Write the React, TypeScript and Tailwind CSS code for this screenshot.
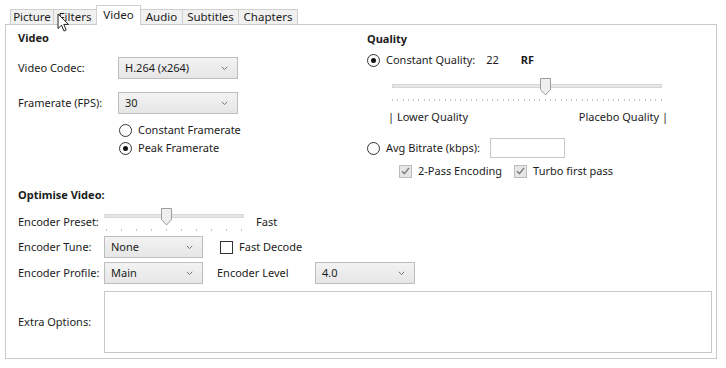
import React from 'react';

const TABS = [
  { label: 'Picture', w: 'w-[44px]' },
  { label: 'Filters', w: 'w-[44px]' },
  { label: 'Video', w: 'w-[45px]', active: true },
  { label: 'Audio', w: 'w-[43px]' },
  { label: 'Subtitles', w: 'w-[57px]' },
  { label: 'Chapters', w: 'w-[60px]' },
];

const Chevron: React.FC = () => (
  <svg width="7" height="5" viewBox="0 0 7 5" className="shrink-0">
    <polyline points="0.8,0.8 3.5,3.6 6.2,0.8" fill="none" stroke="#777" strokeWidth="1" />
  </svg>
);

const Select: React.FC<{ value: string; w: string }> = ({ value, w }) => (
  <div className={`${w} h-[22px] flex items-center justify-between pl-[6px] pr-[9px] border border-[#bdbdbd] bg-gradient-to-b from-[#f3f3f3] to-[#e6e6e6]`}>
    <span>{value}</span>
    <Chevron />
  </div>
);

const Radio: React.FC<{ checked?: boolean }> = ({ checked }) => (
  <div className="w-[13px] h-[13px] rounded-full border border-[#333] bg-white flex items-center justify-center shrink-0">
    {checked && <div className="w-[5px] h-[5px] rounded-full bg-[#111]" />}
  </div>
);

const Check: React.FC<{ checked?: boolean; disabled?: boolean }> = ({ checked, disabled }) => (
  <div
    className={`w-[13px] h-[13px] border flex items-center justify-center shrink-0 ${
      disabled ? 'border-[#bcbcbc] bg-[#e6e6e6]' : 'border-[#333] bg-white'
    }`}
  >
    {checked && (
      <svg width="9" height="8" viewBox="0 0 9 8">
        <polyline points="1,4.2 3.4,6.6 8,1" fill="none" stroke={disabled ? '#7d7d7d' : '#222'} strokeWidth="1.4" />
      </svg>
    )}
  </div>
);

// Trackbar with a downward pointing thumb and tick marks underneath
const Slider: React.FC<{ w: string; pos: number; ticks: number; tickGap: string }> = ({ w, pos, ticks, tickGap }) => (
  <div className={`${w} relative h-[26px] shrink-0`}>
    <div className="absolute left-0 right-0 top-[6px] h-[4px] bg-[#e7e7e7] border border-[#d6d6d6]" />
    <svg width="11" height="18" viewBox="0 0 11 18" className="absolute top-0" style={{ left: pos }}>
      <path d="M0.5 0.5 H10.5 V11.5 L5.5 17 L0.5 11.5 Z" fill="#efefef" stroke="#9c9c9c" />
    </svg>
    <div className={`absolute left-0 right-0 top-[21px] flex justify-between ${tickGap}`}>
      {Array.from({ length: ticks }).map((_, i) => (
        <div key={i} className="w-px h-[2px] bg-[#c4c4c4]" />
      ))}
    </div>
  </div>
);

const App: React.FC = () => {
  return (
    <div
      className="relative w-[726px] h-[368px] bg-white text-[11px] leading-[16px] text-[#1c1c1c] whitespace-nowrap overflow-hidden"
      style={{ fontFamily: '"Noto Sans", "Open Sans", sans-serif' }}
    >
      {/* Tab strip */}
      <div className="flex items-end h-[24px] pl-[10px]">
        {TABS.map((t, i) => (
          <div
            key={t.label}
            className={`${t.w} flex items-center justify-center border border-b-0 border-[#cfcfcf] ${i > 0 ? '-ml-px' : ''} ${
              t.active ? 'relative z-10 h-[20px] -mb-px bg-white pb-[2px]' : 'h-[15px] bg-[#f0f0f0]'
            }`}
          >
            <span className="text-[11.5px]">{t.label}</span>
          </div>
        ))}
      </div>

      {/* Panel */}
      <div className="ml-[5px] w-[712px] h-[335px] border border-[#c9c9c9]">
        <div className="grid grid-cols-[361px_1fr] h-[162px]">
          {/* Video column */}
          <div className="pl-[12px]">
            <div className="mt-[5px] h-[16px] font-bold">Video</div>
            <div className="mt-[11px] flex items-center">
              <span className="w-[100px]">Video Codec:</span>
              <Select value="H.264 (x264)" w="w-[120px]" />
            </div>
            <div className="mt-[13px] flex items-center">
              <span className="w-[100px]">Framerate (FPS):</span>
              <Select value="30" w="w-[120px]" />
            </div>
            <div className="mt-[7px] ml-[101px] h-[18px] flex items-center gap-[6px]">
              <Radio />
              <span>Constant Framerate</span>
            </div>
            <div className="ml-[101px] h-[18px] flex items-center gap-[6px]">
              <Radio checked />
              <span>Peak Framerate</span>
            </div>
          </div>

          {/* Quality column */}
          <div>
            <div className="mt-[6px] h-[16px] font-bold">Quality</div>
            <div className="mt-[5px] h-[16px] flex items-center">
              <Radio checked />
              <span className="ml-[6px]">Constant Quality:</span>
              <span className="ml-[11px]">22</span>
              <span className="ml-[22px] font-bold">RF</span>
            </div>
            <div className="mt-[10px] ml-[25px]">
              <Slider w="w-[270px]" pos={148} ticks={52} tickGap="" />
            </div>
            <div className="mt-[5px] ml-[21px] w-[280px] h-[16px] flex justify-between">
              <span>| Lower Quality</span>
              <span>Placebo Quality |</span>
            </div>
            <div className="mt-[13px] h-[20px] flex items-center">
              <Radio />
              <span className="ml-[6px]">Avg Bitrate (kbps):</span>
              <div className="ml-[10px] w-[75px] h-[20px] border border-[#c7c7c7] bg-white" />
            </div>
            <div className="mt-[5px] ml-[32px] h-[16px] flex items-center">
              <Check checked disabled />
              <span className="ml-[6px]">2-Pass Encoding</span>
              <div className="ml-[12px]">
                <Check checked disabled />
              </div>
              <span className="ml-[6px]">Turbo first pass</span>
            </div>
          </div>
        </div>

        {/* Optimise video */}
        <div className="pl-[12px]">
          <div className="h-[16px] font-bold">Optimise Video:</div>
          <div className="mt-[5px] h-[26px] flex items-start">
            <span className="w-[86px] shrink-0 mt-[6px]">Encoder Preset:</span>
            <Slider w="w-[140px]" pos={57} ticks={10} tickGap="px-[2px]" />
            <span className="ml-[12px] mt-[6px]">Fast</span>
          </div>
          <div className="mt-[2px] flex items-center">
            <span className="w-[86px] shrink-0">Encoder Tune:</span>
            <Select value="None" w="w-[99px]" />
            <div className="ml-[17px]">
              <Check />
            </div>
            <span className="ml-[6px]">Fast Decode</span>
          </div>
          <div className="mt-[4px] flex items-center">
            <span className="w-[86px] shrink-0">Encoder Profile:</span>
            <Select value="Main" w="w-[99px]" />
            <span className="ml-[14px] w-[98px]">Encoder Level</span>
            <Select value="4.0" w="w-[100px]" />
          </div>
          <div className="mt-[7px] flex items-center">
            <span className="w-[86px] shrink-0">Extra Options:</span>
            <div className="w-[608px] h-[62px] border border-[#c7c7c7] bg-white" />
          </div>
        </div>
      </div>

      {/* Mouse pointer over the Filters tab */}
      <svg width="13" height="20" viewBox="0 0 13 20" className="absolute left-[57px] top-[13px] z-20">
        <path d="M1 1 L1 15.5 L4.5 12.2 L7 18 L9.2 17 L6.8 11.4 L11.5 11.4 Z" fill="#fff" stroke="#222" strokeWidth="1" strokeLinejoin="round" />
      </svg>
    </div>
  );
};

export default App;
